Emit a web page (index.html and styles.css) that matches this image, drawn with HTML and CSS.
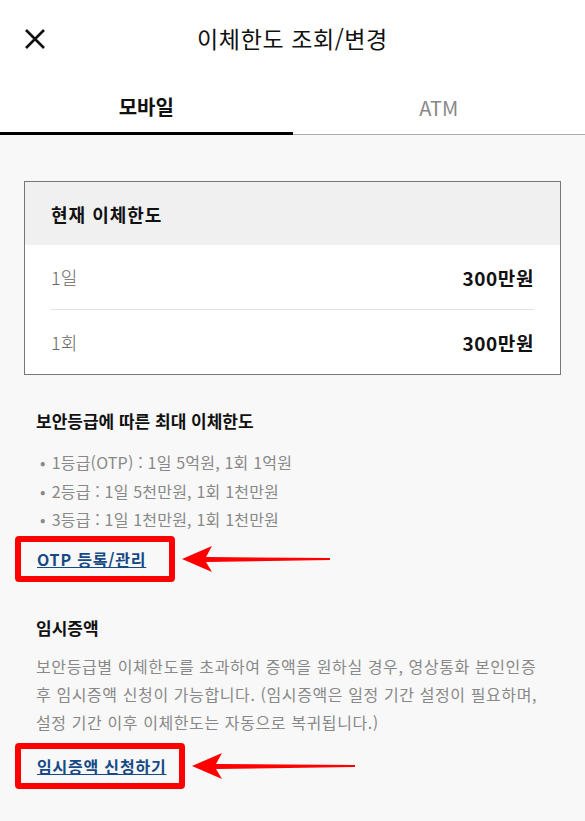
FILE: index.html
```html
<!DOCTYPE html>
<html lang="ko">
<head>
    <meta charset="UTF-8">
    <meta name="viewport" content="width=device-width, initial-scale=1.0">
    <title>이체한도 조회/변경</title>
    <link rel="stylesheet" href="styles.css">
</head>
<body>
    <!-- 상단 헤더 -->
    <header class="top-bar">
        <button class="close-btn" type="button" aria-label="닫기">
            <svg width="22" height="22" viewBox="0 0 22 22">
                <path d="M2 2 L20 20 M20 2 L2 20" stroke="#111" stroke-width="2.6" fill="none"/>
            </svg>
        </button>
        <h1 class="top-title">이체한도 조회/변경</h1>
    </header>

    <!-- 탭 -->
    <nav class="tabs">
        <div class="tab active">모바일</div>
        <div class="tab">ATM</div>
    </nav>

    <main class="content">
        <!-- 현재 이체한도 -->
        <section class="limit-card">
            <div class="limit-head">현재 이체한도</div>
            <div class="limit-rows">
                <div class="limit-row">
                    <span class="limit-label">1일</span>
                    <span class="limit-value">300만원</span>
                </div>
                <div class="limit-row">
                    <span class="limit-label">1회</span>
                    <span class="limit-value">300만원</span>
                </div>
            </div>
        </section>

        <!-- 보안등급 안내 -->
        <section class="info">
            <h2 class="info-title">보안등급에 따른 최대 이체한도</h2>
            <ul class="grade-list">
                <li>1등급(OTP) : 1일 5억원, 1회 1억원</li>
                <li>2등급 : 1일 5천만원, 1회 1천만원</li>
                <li>3등급 : 1일 1천만원, 1회 1천만원</li>
            </ul>
            <div class="link-row first">
                <div class="mark-box"><a href="#" class="info-link">OTP 등록/관리</a></div>
                <svg class="arrow" width="150" height="30" viewBox="0 0 150 30">
                    <polygon points="0,15 30,2 24,13 148,14 148,16 24,18 30,28" fill="#f00"/>
                </svg>
            </div>
        </section>

        <!-- 임시증액 -->
        <section class="info">
            <h2 class="info-title">임시증액</h2>
            <p class="info-text">보안등급별 이체한도를 초과하여 증액을 원하실 경우, 영상통화 본인인증<br>후 임시증액 신청이 가능합니다. (임시증액은 일정 기간 설정이 필요하며,<br>설정 기간 이후 이체한도는 자동으로 복귀됩니다.)</p>
            <div class="link-row second">
                <div class="mark-box"><a href="#" class="info-link">임시증액 신청하기</a></div>
                <svg class="arrow" width="165" height="30" viewBox="0 0 165 30">
                    <polygon points="0,15 30,2 24,13 163,14 163,16 24,18 30,28" fill="#f00"/>
                </svg>
            </div>
        </section>
    </main>
</body>
</html>
```

FILE: styles.css
```css
/* 기본 */
body {
    margin: 0;
    font-family: "Noto Sans CJK KR", "Noto Sans", sans-serif;
    background-color: #f8f8f8;
    color: #111;
}

/* 헤더 */
.top-bar {
    height: 80px;
    background-color: #fff;
    display: flex;
    align-items: center;
    justify-content: center;
    position: relative;
}

.close-btn {
    position: absolute;
    left: 24px;
    top: 28px;
    padding: 0;
    border: none;
    background: none;
    width: 22px;
    height: 22px;
}

.top-title {
    margin: 0 0 4px;
    font-size: 23px;
    font-weight: 400;
    letter-spacing: 0.6px;
}

/* 탭 */
.tabs {
    display: flex;
    background-color: #fff;
    height: 55px;
}

.tab {
    flex: 1;
    display: flex;
    align-items: center;
    justify-content: center;
    font-size: 20px;
    color: #888;
    border-bottom: 1px solid #aaa;
    box-sizing: border-box;
}

.tab.active {
    color: #111;
    font-weight: 700;
    border-bottom: 3px solid #000;
}

/* 본문 */
.content {
    padding: 46px 24px 40px;
}

.limit-card {
    background-color: #fff;
    border: 1px solid #777;
}

.limit-head {
    height: 63px;
    display: flex;
    align-items: center;
    padding: 0 26px;
    background-color: #f0f0f0;
    font-size: 18px;
    font-weight: 700;
    letter-spacing: 1px;
}

.limit-rows {
    padding: 0 26px;
}

.limit-row {
    height: 64px;
    display: flex;
    align-items: center;
    justify-content: space-between;
    font-size: 18px;
}

.limit-row + .limit-row {
    border-top: 1px solid #e3e3e3;
}

.limit-label {
    color: #666;
    font-weight: 300;
}

.limit-value {
    font-size: 19px;
    font-weight: 700;
    letter-spacing: 0.6px;
}

/* 안내 영역 */
.info {
    padding: 0 12px;
    margin-top: 34px;
}

.info-title {
    margin: 0;
    font-size: 17px;
    line-height: 24px;
    font-weight: 700;
}

.grade-list {
    list-style: none;
    margin: 15px 0 0;
    padding: 0 0 0 4px;
    font-size: 16px;
    line-height: 28.5px;
    color: #888;
    letter-spacing: 0.2px;
}

.grade-list li::before {
    content: "•";
    margin-right: 6px;
}

.info-text {
    margin: 12px 0 0;
    font-size: 16px;
    line-height: 28px;
    color: #888;
    letter-spacing: 0.6px;
}

.link-row {
    display: flex;
    align-items: center;
    gap: 7px;
    margin-left: -21px;
}

.link-row.first {
    margin-top: 2px;
}

.link-row.second {
    margin-top: 7px;
}

.mark-box {
    border: 6px solid #f00;
    border-radius: 4px;
    height: 34px;
    display: flex;
    align-items: center;
    padding: 0 16px;
}

.first .mark-box {
    padding-right: 23px;
}

.second .mark-box {
    padding-right: 13px;
}

.info-link {
    font-size: 16px;
    font-weight: 700;
    color: #164a86;
    text-decoration: underline;
    letter-spacing: 0.8px;
}
```
